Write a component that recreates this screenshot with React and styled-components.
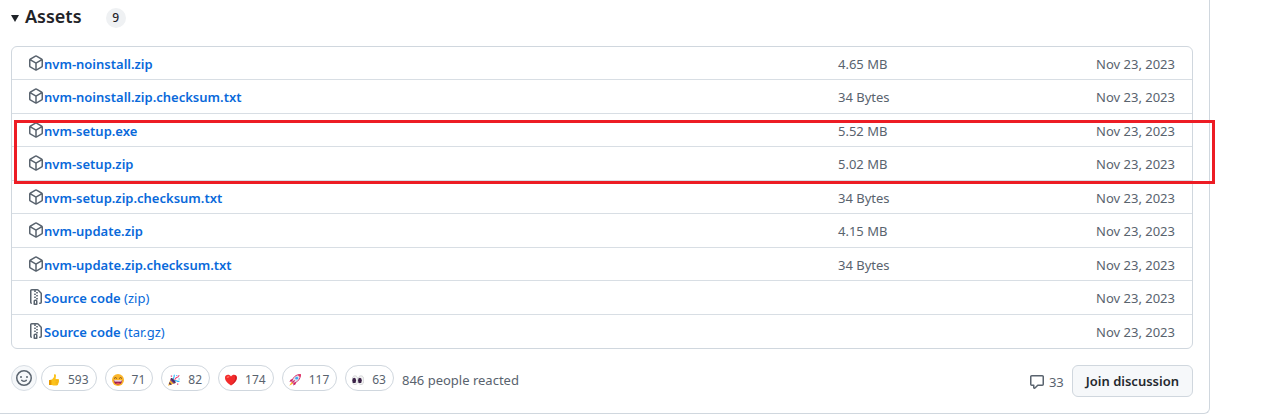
import styled, { createGlobalStyle } from "styled-components";

const GlobalStyle = createGlobalStyle`
  * {
    box-sizing: border-box;
  }

  body {
    margin: 0;
    background: #fff;
    color: #1f2328;
    font-family: "Noto Sans", "Open Sans", sans-serif;
    font-size: 13px;
    line-height: 20px;
  }
`;

const Panel = styled.main`
  margin-right: 59px;
  padding: 4px 16px 16px 11px;
  border: 1px solid #d0d7de;
  border-width: 0 1px 1px 0;
  border-bottom-right-radius: 6px;
`;

const Summary = styled.summary`
  display: flex;
  align-items: center;
  height: 26px;
  margin-bottom: 16px;
  cursor: pointer;
  list-style: none;
`;

const Caret = styled.span`
  width: 8px;
  margin-top: 2px;
  border: 4px solid transparent;
  border-top: 7px solid #1f2328;
  border-bottom: 0;
`;

const Title = styled.h3`
  margin: 0 24px 2px 6px;
  font-size: 18px;
  font-weight: 600;
  line-height: 24px;
`;

const Counter = styled.span`
  min-width: 20px;
  margin-top: 2px;
  padding: 0 6px;
  border-radius: 20px;
  background: #eff1f3;
  font-size: 12px;
  font-weight: 500;
  text-align: center;
`;

const AssetBox = styled.div`
  position: relative;
`;

const Cell = styled.td`
  width: ${(props) => props.$width};
  padding: 2px 0 0;
  padding-left: ${(props) => (props.$first ? "16px" : "0")};
  padding-right: ${(props) => (props.$end ? "17px" : "0")};
  border-bottom: 1px solid #d8dee4;
  color: #59636e;
  text-align: ${(props) => (props.$end ? "right" : "left")};
`;

const AssetTable = styled.table`
  width: 100%;
  border: 1px solid #d0d7de;
  border-radius: 6px;
  border-spacing: 0;
  table-layout: fixed;

  tr {
    height: 33px;
  }

  tr:nth-child(even) {
    height: 34px;
  }

  tr:nth-child(even) ${Cell}, tr:last-child ${Cell} {
    padding-top: 0;
  }

  tr:last-child ${Cell} {
    border-bottom: 0;
  }
`;

const Icon = styled.svg`
  flex: none;
  width: 16px;
  height: 16px;
  fill: #59636e;
`;

const Asset = styled.div`
  display: flex;
  align-items: flex-start;

  ${Icon} {
    margin-top: 1px;
  }
`;

const AssetLink = styled.a`
  color: #0969da;
  font-weight: 600;
  text-decoration: none;

  span {
    font-weight: 400;
  }
`;

const Highlight = styled.div`
  position: absolute;
  top: 74px;
  right: -22px;
  left: 3px;
  height: 64px;
  border: 3px solid #ed1c24;
  pointer-events: none;
`;

const Footer = styled.footer`
  display: flex;
  align-items: center;
  justify-content: space-between;
  margin-top: 16px;
`;

const Reactions = styled.div`
  display: flex;
  align-items: center;
  gap: 8px;
  margin-bottom: 6px;
  color: #59636e;
`;

const ReactionTotal = styled.span`
  padding-top: 4px;
`;

const AddReaction = styled.button`
  display: grid;
  place-items: center;
  width: 26px;
  height: 26px;
  margin-right: -4px;
  padding: 0;
  border: 1px solid #d8dee4;
  border-radius: 50%;
  background: #f6f8fa;
`;

const Reaction = styled.button`
  display: flex;
  align-items: center;
  gap: 8px;
  height: 26px;
  padding: 3px 7px 0 6px;
  border: 1px solid #d0d7de;
  border-radius: 100px;
  background: #fff;
  color: #59636e;
  font: inherit;
  font-size: 12px;
`;

const Emoji = styled.svg`
  width: 12px;
  height: 12px;
`;

const Discussion = styled.div`
  display: flex;
  align-items: center;
  gap: 8px;
`;

const CommentCount = styled.a`
  display: flex;
  align-items: center;
  gap: 4px;
  padding-top: 2px;
  color: #59636e;
  text-decoration: none;
`;

const JoinButton = styled.button`
  height: 32px;
  padding: 0 13px;
  border: 1px solid #d0d7de;
  border-radius: 6px;
  background: #f6f8fa;
  color: #25292e;
  font: inherit;
  font-weight: 600;
`;

const icons = {
  package:
    "m8.878.392 5.25 3.045c.54.314.872.89.872 1.514v6.098a1.75 1.75 0 0 1-.872 1.514l-5.25 3.045a1.75 1.75 0 0 1-1.756 0l-5.25-3.045A1.75 1.75 0 0 1 1 11.049V4.951c0-.624.332-1.201.872-1.514L7.122.392a1.75 1.75 0 0 1 1.756 0ZM7.875 1.69l-4.63 2.685L8 7.133l4.755-2.758-4.63-2.685a.248.248 0 0 0-.25 0ZM2.5 5.677v5.372c0 .09.047.171.125.216l4.625 2.683V8.432Zm6.25 8.271 4.625-2.683a.25.25 0 0 0 .125-.216V5.677L8.75 8.432Z",
  zip: "M3.5 1.75v11.5c0 .09.048.173.126.217a.75.75 0 0 1-.752 1.298A1.748 1.748 0 0 1 2 13.25V1.75C2 .784 2.784 0 3.75 0h5.586c.464 0 .909.185 1.237.513l2.914 2.914c.329.328.513.773.513 1.237v8.586A1.75 1.75 0 0 1 12.25 15h-.5a.75.75 0 0 1 0-1.5h.5a.25.25 0 0 0 .25-.25V4.664a.25.25 0 0 0-.073-.177L9.513 1.573a.25.25 0 0 0-.177-.073H7.25a.75.75 0 0 1 0 1.5h-.5a.75.75 0 0 1 0-1.5h-3a.25.25 0 0 0-.25.25Zm3.75 8.75h.5c.966 0 1.75.784 1.75 1.75v3a.75.75 0 0 1-.75.75h-2.5a.75.75 0 0 1-.75-.75v-3c0-.966.784-1.75 1.75-1.75ZM6 5.25a.75.75 0 0 1 .75-.75h.5a.75.75 0 0 1 0 1.5h-.5A.75.75 0 0 1 6 5.25Zm.75 2.25h.5a.75.75 0 0 1 0 1.5h-.5a.75.75 0 0 1 0-1.5ZM8 6.75A.75.75 0 0 1 8.75 6h.5a.75.75 0 0 1 0 1.5h-.5A.75.75 0 0 1 8 6.75ZM8.75 3h.5a.75.75 0 0 1 0 1.5h-.5a.75.75 0 0 1 0-1.5ZM8 9.75A.75.75 0 0 1 8.75 9h.5a.75.75 0 0 1 0 1.5h-.5A.75.75 0 0 1 8 9.75Zm-1 2.5v2.25h1v-2.25a.25.25 0 0 0-.25-.25h-.5a.25.25 0 0 0-.25.25Z",
  smiley:
    "M8 0a8 8 0 1 1 0 16A8 8 0 0 1 8 0ZM1.5 8a6.5 6.5 0 1 0 13 0 6.5 6.5 0 0 0-13 0Zm3.82 1.636a.75.75 0 0 1 1.038.175l.007.009c.103.118.22.222.35.31.264.178.683.37 1.285.37.602 0 1.02-.192 1.285-.371.13-.088.247-.192.35-.31l.007-.008a.75.75 0 0 1 1.222.87c-.2.28-.44.5-.728.677-.63.418-1.37.638-2.136.629-.946 0-1.652-.308-2.126-.63a3.331 3.331 0 0 1-.737-.686.75.75 0 0 1 .183-1.045ZM12 7a1 1 0 1 1-2 0 1 1 0 0 1 2 0ZM5 8a1 1 0 1 1 0-2 1 1 0 0 1 0 2Z",
  comment:
    "M1 2.75C1 1.784 1.784 1 2.75 1h10.5c.966 0 1.75.784 1.75 1.75v7.5A1.75 1.75 0 0 1 13.25 12H9.06l-2.573 2.573A1.458 1.458 0 0 1 4 13.543V12H2.75A1.75 1.75 0 0 1 1 10.25Zm1.75-.25a.25.25 0 0 0-.25.25v7.5c0 .138.112.25.25.25h2a.75.75 0 0 1 .75.75v2.19l2.72-2.72a.749.749 0 0 1 .53-.22h4.5a.25.25 0 0 0 .25-.25v-7.5a.25.25 0 0 0-.25-.25Z",
};

const assets = [
  { name: "nvm-noinstall.zip", size: "4.65 MB" },
  { name: "nvm-noinstall.zip.checksum.txt", size: "34 Bytes" },
  { name: "nvm-setup.exe", size: "5.52 MB" },
  { name: "nvm-setup.zip", size: "5.02 MB" },
  { name: "nvm-setup.zip.checksum.txt", size: "34 Bytes" },
  { name: "nvm-update.zip", size: "4.15 MB" },
  { name: "nvm-update.zip.checksum.txt", size: "34 Bytes" },
  { name: "Source code", format: "(zip)" },
  { name: "Source code", format: "(tar.gz)" },
];

const reactions = [
  {
    label: "thumbs up",
    count: 593,
    art: (
      <>
        <path d="M1 6.2 4 5.6 6 3V.8C6.4 0 8 .2 8 1.8L7.6 5H10c1 0 1.3 1 .8 1.6.5.5.4 1.3-.2 1.7.3.6 0 1.2-.5 1.5.1.9-.4 1.6-1.4 1.6H5.4L3.8 11 1 11Z" fill="#fcc21b" />
        <path d="M1 6.2 3.4 5.8v5.1L1 11Z" fill="#e59600" />
        <path d="M7.6 6.7h3M7.6 8.3h2.8M7.5 9.9h2.4" stroke="#e8a317" strokeWidth=".5" />
      </>
    ),
  },
  {
    label: "laugh",
    count: 71,
    art: (
      <>
        <circle cx="6" cy="6" r="6" fill="#fbb62b" />
        <path d="M2 4.5 3.5 3.6 4.9 4.5M7.1 4.5 8.5 3.6 10 4.5" fill="none" stroke="#5f3b1c" strokeWidth=".8" />
        <path d="M1.7 6.2h8.6c-.2 2.8-1.9 4.2-4.3 4.2S1.9 9 1.7 6.2Z" fill="#9b1c55" />
        <path d="M2.2 6.3h7.6l-.4 1.2H2.6Z" fill="#fff" />
        <path d="M3.8 9.6c1-1 3.4-1 4.4 0-1.2 1-3.2 1-4.4 0Z" fill="#ef5350" />
      </>
    ),
  },
  {
    label: "hooray",
    count: 82,
    art: (
      <>
        <path d="M3 4 0 11.7 7.5 9Z" fill="#fbb62b" />
        <path d="m3 4-.8 2.2 3.5 3.5L7.5 9Z" fill="#7b3f98" />
        <path d="M1.5 8 .8 9.7l1.4 1.4 1.8-.6Z" fill="#5f3b5a" />
        <ellipse cx="5.3" cy="6.5" rx="1.2" ry="3.2" transform="rotate(-42 5.3 6.5)" fill="#472f63" />
        <path d="M5.5 5.2C5.1 3.6 6.9 3.1 6.1.8M6.8 6.5C8.8 6 9 8 11.5 7.3" fill="none" stroke="#29b6f6" strokeWidth="1.1" />
        <path d="M6.5 5.5C8 5 7.7 3.3 9.2 3.3S10 1.4 11.4 1.5" fill="none" stroke="#ec407a" strokeWidth="1.1" />
        <path d="M2.8 1.4h1.3v1.3H2.8ZM9 9.4h1.3v1.3H9Z" fill="#ec407a" />
        <path d="M8.3 1h1v1h-1ZM10.5 4.5h1.2v1.1h-1.2Z" fill="#29b6f6" />
      </>
    ),
  },
  {
    label: "heart",
    count: 174,
    art: (
      <>
        <path d="M6 11.5C3.5 9.7 0 7.2 0 3.7 0 .4 4.5-.1 6 2.6 7.5-.1 12 .4 12 3.7c0 3.5-3.5 6-6 7.8Z" fill="#f32b2b" />
        <path d="M9.5 1.2c3 .8 3.4 5.4-3.5 10.3 2.6-3.5 5.6-6 3.5-10.3Z" fill="#cc1d24" />
        <ellipse cx="3" cy="3" rx="1.5" ry=".8" transform="rotate(-30 3 3)" fill="#ff6b60" />
      </>
    ),
  },
  {
    label: "rocket",
    count: 117,
    art: (
      <>
        <path d="M4.2 5 1.8 5.4.4 7.8l3-.5M7 7.8l-.4 2.4-2.4 1.4.5-3" fill="#c51162" />
        <path d="M2.7 7.8.2 11.8l4-2.4Z" fill="#fbb62b" />
        <path d="M2.8 7.5C3.7 3.6 6.7.5 11.6.3c-.1 4.8-3.1 8-7 8.9Z" fill="#dce5ec" stroke="#d82464" strokeWidth=".9" />
        <path d="M8.7.9c.8-.4 1.8-.6 2.9-.6 0 1.1-.2 2.1-.6 3Z" fill="#e53965" />
        <circle cx="7.7" cy="4.2" r="1.4" fill="#42a5f5" />
        <path d="m3.5 8.5 2.2-2.2" stroke="#d82464" strokeWidth="1.2" />
      </>
    ),
  },
  {
    label: "eyes",
    count: 63,
    art: (
      <>
        <ellipse cx="3" cy="6.2" rx="2.8" ry="4.4" fill="#f3f3f3" stroke="#b4b7ba" strokeWidth=".5" />
        <ellipse cx="9" cy="6.2" rx="2.8" ry="4.4" fill="#f3f3f3" stroke="#b4b7ba" strokeWidth=".5" />
        <ellipse cx="2.2" cy="6.4" rx="1.9" ry="2.7" fill="#3b2348" />
        <ellipse cx="7.9" cy="6.4" rx="1.9" ry="2.7" fill="#3b2348" />
      </>
    ),
  },
];

function Octicon({ name }) {
  return (
    <Icon viewBox="0 0 16 16" aria-hidden="true">
      <path d={icons[name]} />
    </Icon>
  );
}

function AssetRow({ asset }) {
  return (
    <tr>
      <Cell $first $width="70%">
        <Asset>
          <Octicon name={asset.format ? "zip" : "package"} />
          <AssetLink href="#">
            {asset.name} {asset.format && <span>{asset.format}</span>}
          </AssetLink>
        </Asset>
      </Cell>
      <Cell $width="10%">{asset.size}</Cell>
      <Cell $end>Nov 23, 2023</Cell>
    </tr>
  );
}

function App() {
  return (
    <>
      <GlobalStyle />
      <Panel>
        <details open>
          <Summary>
            <Caret />
            <Title>Assets</Title>
            <Counter>9</Counter>
          </Summary>
          <AssetBox>
            <AssetTable aria-label="Release assets">
              <tbody>
                {assets.map((asset) => (
                  <AssetRow key={asset.name + (asset.format ?? "")} asset={asset} />
                ))}
              </tbody>
            </AssetTable>
            <Highlight />
          </AssetBox>
        </details>

        <Footer>
          <Reactions>
            <AddReaction aria-label="Add a reaction">
              <Octicon name="smiley" />
            </AddReaction>
            {reactions.map(({ label, count, art }) => (
              <Reaction key={label} aria-label={`${count} ${label}`}>
                <Emoji viewBox="0 0 12 12">{art}</Emoji>
                {count}
              </Reaction>
            ))}
            <ReactionTotal>846 people reacted</ReactionTotal>
          </Reactions>
          <Discussion>
            <CommentCount href="#">
              <Octicon name="comment" />
              33
            </CommentCount>
            <JoinButton>Join discussion</JoinButton>
          </Discussion>
        </Footer>
      </Panel>
    </>
  );
}

export default App;
